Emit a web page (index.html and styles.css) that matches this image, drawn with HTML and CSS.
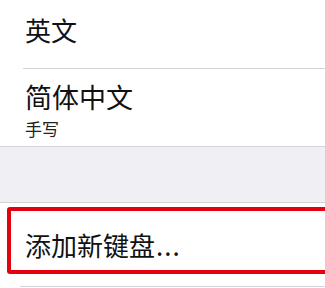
FILE: index.html
```html
<!DOCTYPE html>
<html lang="zh-CN">
<head>
<meta charset="utf-8">
<link rel="stylesheet" href="styles.css">
</head>
<body>
<div class="group">
  <div class="row row-en">
    <span class="title">英文</span>
  </div>
  <div class="sep sep-a"></div>
  <div class="row row-zh">
    <span class="title title-zh">简体中文</span>
    <span class="sub">手写</span>
  </div>
</div>
<div class="spacer"></div>
<div class="group">
  <div class="row row-add">
    <span class="title">添加新键盘<span class="dots">...</span></span>
    <div class="mark"></div>
  </div>
  <div class="sep sep-b"></div>
</div>
</body>
</html>
```

FILE: styles.css
```css
html, body {
  margin: 0;
  padding: 0;
  background: #ffffff;
  width: 325px;
  height: 288px;
  overflow: hidden;
  font-family: "Noto Sans CJK SC", "Noto Sans", sans-serif;
  color: #111111;
}
.group {
  display: flex;
  flex-direction: column;
  background: #ffffff;
}
.row {
  display: flex;
  flex-direction: column;
  box-sizing: border-box;
  padding-left: 25px;
}
.title {
  font-size: 26px;
  line-height: 26px;
  font-weight: 400;
  white-space: nowrap;
}
.row-en {
  height: 68px;
  padding-top: 17px;
}
.row-zh {
  height: 77px;
  padding-top: 14px;
}
.title-zh {
  font-size: 27px;
  line-height: 27px;
}
.sub {
  margin-top: 10px;
  font-size: 17px;
  line-height: 17px;
  color: #222222;
}
.dots {
  font-family: "Noto Sans", "DejaVu Sans", sans-serif;
  font-size: 27px;
  letter-spacing: 1px;
  margin-left: 1px;
}
.sep {
  height: 1px;
  background: #d4d4d8;
}
.sep-a {
  margin-left: 23px;
}
.sep-b {
  margin-left: 20px;
}
.spacer {
  height: 55px;
  background: #efeff4;
  border-top: 1px solid #d4d4d8;
  border-bottom: 1px solid #d4d4d8;
}
.row-add {
  position: relative;
  height: 83px;
  padding-top: 29px;
}
.mark {
  position: absolute;
  left: 7px;
  top: 4px;
  right: -10px;
  height: 67px;
  box-sizing: border-box;
  border: 4px solid #e3000f;
  border-radius: 3px;
}
```
